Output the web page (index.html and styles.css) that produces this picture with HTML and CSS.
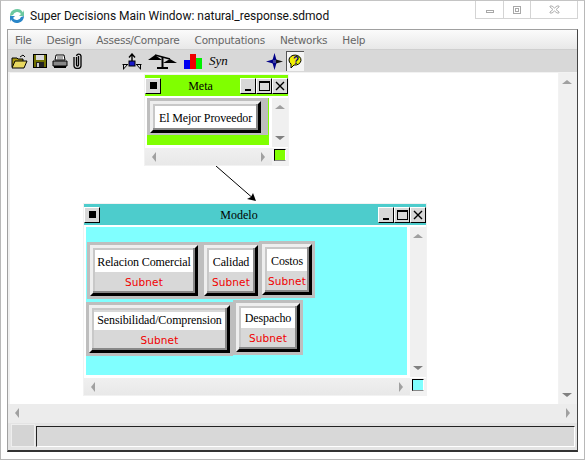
FILE: index.html
```html
<!DOCTYPE html>
<html lang="en">
<head>
  <meta charset="UTF-8">
  <title>Super Decisions Main Window</title>
  <link rel="stylesheet" href="styles.css">
</head>
<body>
<div class="frame">
  <div class="titlebar">
    <svg class="app-icon" width="16" height="16" viewBox="0 0 16 16">
      <path d="M1 8a7 7 0 0 1 13-3.500L15 2v6h-5l2-2a4.500 4.500 0 0 0-8 1z" fill="#6cc8a0"/>
      <path d="M15 8a7 7 0 0 1-13 3.500L1 14V8h5l-2 2a4.500 4.500 0 0 0 8-1z" fill="#2a86c8"/>
    </svg>
    <span class="title-text">Super Decisions Main Window: natural_response.sdmod</span>
    <div class="winbtns">
      <div class="winbtn wb-min"><svg width="8" height="3"><rect x="0.500" y="0.500" width="7" height="2" fill="none" stroke="#a8a8a8"/></svg></div>
      <div class="winbtn wb-max"><svg width="8" height="8"><rect x="0.500" y="0.500" width="7" height="7" fill="none" stroke="#a8a8a8"/><rect x="2.500" y="2.500" width="3" height="3" fill="none" stroke="#a8a8a8"/></svg></div>
      <div class="winbtn wb-close"><svg width="11" height="9"><path d="M1 1h2l2.500 2 2.500-2h2v1l-3 2.500 3 2.500v1H8L5.500 6 3 8H1V7l3-2.500L1 2z" fill="none" stroke="#b0b0b0"/></svg></div>
    </div>
  </div>

  <div class="client">
    <div class="menubar">
      <span>File</span><span>Design</span><span>Assess/Compare</span><span>Computations</span><span>Networks</span><span>Help</span>
    </div>

    <div class="toolbar">
      <svg class="t-open" width="17" height="15" viewBox="0 0 17 15">
        <path d="M1 13V4h5l1 1h5v2" fill="#a89810" stroke="#000"/>
        <path d="M1 14l3-7h12l-3 7z" fill="#e8d860" stroke="#000"/>
        <path d="M9 3l3-2 2 2" fill="none" stroke="#000"/>
      </svg>
      <svg class="t-save" width="14" height="14" viewBox="0 0 14 14">
        <rect x="0.500" y="0.500" width="13" height="13" fill="#707000" stroke="#000"/>
        <rect x="3" y="1" width="8" height="5" fill="#d8d8d8"/>
        <rect x="3" y="8" width="8" height="5" fill="#222"/>
        <rect x="4" y="9" width="2" height="4" fill="#ccc"/>
      </svg>
      <svg class="t-print" width="16" height="14" viewBox="0 0 16 14">
        <path d="M4 1h8l1 5H3z" fill="#fff" stroke="#000"/>
        <path d="M1 7h14v5H1z" fill="#888" stroke="#000"/>
        <path d="M2 13h12" stroke="#000" stroke-width="2"/>
        <path d="M5 3h6M5 5h6" stroke="#555"/>
      </svg>
      <svg class="t-clip" width="9" height="16" viewBox="0 0 9 16">
        <path d="M3.500 4v8a1 1 0 0 0 2 0V3M1 4v8.500a3.500 3 0 0 0 7 0V3a2.300 2.300 0 0 0-4.500 0" fill="none" stroke="#000" stroke-width="1.300"/>
      </svg>
      <svg class="t-net" width="20" height="17" viewBox="0 0 20 17">
        <rect x="7" y="8" width="6" height="5" fill="#1818c8" stroke="#000"/>
        <path d="M10 8V2M7 4.500L10 1l3 3.500" fill="none" stroke="#000" stroke-width="1.400"/>
        <path d="M6 11l-4.500 5M0.500 11.500h5M1.500 11.500v5" fill="none" stroke="#000"/>
        <path d="M14 11l4.500 5M19.500 11.500h-5M18.500 11.500v5" fill="none" stroke="#000"/>
      </svg>
      <svg class="t-scale" width="29" height="16" viewBox="0 0 29 16">
        <path d="M0 7l7-5 7 5z" fill="#000"/>
        <path d="M7 2l15 4" stroke="#000" stroke-width="1.500"/>
        <path d="M15 10l7-4 7 4z" fill="#000"/>
        <path d="M14.500 4v10M9 15h11" stroke="#000" stroke-width="2"/>
      </svg>
      <svg class="t-bars" width="18" height="16" viewBox="0 0 18 16">
        <rect x="0" y="7" width="6" height="9" fill="#0000f0"/>
        <rect x="6" y="1" width="6" height="15" fill="#f00000"/>
        <rect x="12" y="5" width="6" height="11" fill="#00f000"/>
      </svg>
      <span class="t-syn">Syn</span>
      <svg class="t-cross" width="17" height="17" viewBox="0 0 17 17">
        <path d="M0 8.500L7 6.500v4z" fill="#000088"/>
        <path d="M17 8.500L10 6.500v4z" fill="#111"/>
        <path d="M8.500 0L6.500 7h4z" fill="#000088"/>
        <path d="M8.500 17L6.500 10h4z" fill="#000088"/>
        <rect x="7" y="7" width="3" height="3" fill="#4040a0"/>
      </svg>
      <div class="t-help">
        <svg width="15" height="15" viewBox="0 0 15 15">
          <path d="M1 6a6 5 0 1 1 5 5l-3 3v-4a5 5 0 0 1-2-4z" fill="#f0f000" stroke="#000"/>
          <text x="5" y="10" class="help-mark">?</text>
        </svg>
      </div>
    </div>

    <div class="workarea">
      <div class="canvas">
        <svg class="arrow" width="50" height="40" viewBox="0 0 50 40">
          <path d="M5 3L44 37" stroke="#000"/>
          <path d="M45 38l-9-2 4-2 2-4z" fill="#000"/>
        </svg>

        <div class="subwin sw-meta">
          <div class="sw-title">
            <div class="mbtn"><i class="ic-sys"></i></div>
            <span class="sw-name">Meta</span>
            <div class="mbtn"><i class="ic-min"></i></div>
            <div class="mbtn"><i class="ic-max"></i></div>
            <div class="mbtn"><svg width="10" height="10"><path d="M1 1l8 8M9 1l-8 8" stroke="#000" stroke-width="1.400"/></svg></div>
          </div>
          <div class="sw-body">
            <div class="sw-canvas">
              <div class="node n-meta"><div class="face"><div class="name">El Mejor Proveedor</div></div></div>
            </div>
            <div class="vscroll"><b class="up"></b><b class="down"></b></div>
          </div>
          <div class="sw-foot">
            <div class="hscroll"><b class="left"></b><b class="right"></b></div>
            <div class="swatch"></div>
          </div>
        </div>

        <div class="subwin sw-model">
          <div class="sw-title">
            <div class="mbtn"><i class="ic-sys"></i></div>
            <span class="sw-name">Modelo</span>
            <div class="mbtn"><i class="ic-min"></i></div>
            <div class="mbtn"><i class="ic-max"></i></div>
            <div class="mbtn"><svg width="10" height="10"><path d="M1 1l8 8M9 1l-8 8" stroke="#000" stroke-width="1.400"/></svg></div>
          </div>
          <div class="sw-body">
            <div class="sw-canvas">
              <div class="node n-rel"><div class="face"><div class="name">Relacion Comercial</div><div class="sub">Subnet</div></div></div>
              <div class="node n-cal"><div class="face"><div class="name">Calidad</div><div class="sub">Subnet</div></div></div>
              <div class="node n-cos"><div class="face"><div class="name">Costos</div><div class="sub">Subnet</div></div></div>
              <div class="node n-sen"><div class="face"><div class="name">Sensibilidad/Comprension</div><div class="sub">Subnet</div></div></div>
              <div class="node n-des"><div class="face"><div class="name">Despacho</div><div class="sub">Subnet</div></div></div>
            </div>
            <div class="vscroll"><b class="up"></b><b class="down"></b></div>
          </div>
          <div class="sw-foot">
            <div class="hscroll"><b class="left"></b><b class="right"></b></div>
            <div class="swatch"></div>
          </div>
        </div>
      </div>
      <div class="vscroll main-v"><b class="up"></b><b class="down"></b></div>
    </div>

    <div class="hscroll main-h"><b class="left"></b><b class="right"></b></div>

    <div class="statusbar">
      <div class="status-cell"></div>
      <div class="status-field"></div>
    </div>
  </div>
</div>
</body>
</html>
```
FILE: styles.css
```css
* {
  box-sizing: border-box;
}
html, body {
  margin: 0;
  height: 460px;
  overflow: hidden;
}
body {
  background: #fff;
  font-family: "Liberation Serif", serif;
}
.frame {
  height: 460px;
  border: 1px solid #b8b8b8;
  border-top: 1px solid #c4c4c4;
  padding: 0 6px 7px 7px;
  display: flex;
  flex-direction: column;
}

/* title bar */
.titlebar {
  height: 28px;
  margin-left: -6px;
  display: flex;
  align-items: flex-start;
  flex: none;
}
.app-icon {
  margin: 7px 5px 0 7px;
  flex: none;
}
.title-text {
  font-family: Roboto, sans-serif;
  font-size: 12px;
  line-height: 16px;
  margin-top: 7px;
  color: #111;
}
.winbtns {
  margin-left: auto;
  display: flex;
  height: 18px;
  border: 1px solid #d4d4d4;
  border-top: 0;
}
.winbtn {
  height: 17px;
  display: flex;
  align-items: center;
  justify-content: center;
  border-left: 1px solid #d4d4d4;
}
.winbtn:first-child {
  border-left: 0;
}
.wb-min { width: 27px; padding-top: 3px; }
.wb-max { width: 27px; }
.wb-close { width: 47px; }

/* main client area */
.client {
  flex: 1;
  display: flex;
  flex-direction: column;
  border: 1px solid #a0a0a0;
  border-right: 1px solid #444;
  border-bottom: 2px solid #333;
  min-height: 0;
  margin-left: -1px;
}
.menubar {
  height: 20px;
  flex: none;
  display: flex;
  align-items: center;
  padding-left: 7px;
  gap: 15px;
  background: linear-gradient(#fbfbfb, #e8e8e8);
  border-bottom: 1px solid #cfcfcf;
  font-family: "DejaVu Sans", sans-serif;
  font-size: 10.500px;
  letter-spacing: -0.250px;
  color: #666;
}
.toolbar {
  height: 22px;
  flex: none;
  background: #d8d8d8;
  display: flex;
  align-items: center;
  padding-left: 3px;
}
.t-save { margin-left: 5px; }
.t-print { margin-left: 5px; }
.t-clip { margin-left: 5px; }
.t-net { margin-left: 40px; }
.t-scale { margin-left: 6px; }
.t-bars { margin-left: 7px; }
.t-syn {
  margin-left: 7px;
  width: 22px;
  font-family: "Liberation Serif", serif;
  font-style: italic;
  font-size: 13px;
  color: #000;
}
.t-cross { margin-left: 35px; }
.t-help {
  margin-left: 3px;
  width: 18px;
  height: 20px;
  background: #f4f4f4;
  border-left: 1px solid #555;
  border-top: 1px solid #555;
  display: flex;
  align-items: center;
  justify-content: center;
}
.help-mark {
  font-family: "Liberation Sans", sans-serif;
  font-size: 10px;
  font-weight: bold;
  fill: #000080;
}
.workarea {
  flex: 1;
  display: flex;
  background: #f2f2f2;
  min-height: 0;
  padding-left: 2px;
  padding-top: 1px;
}
.canvas {
  flex: 1;
  background: #fff;
  position: relative;
}
.arrow {
  position: absolute;
  left: 201px;
  top: 90px;
}

/* scrollbars */
.vscroll {
  flex: none;
  width: 16px;
  background: #f0f0f0;
  position: relative;
}
.main-v {
  width: 18px;
  margin-left: 1px;
}
.hscroll {
  flex: none;
  height: 17px;
  background: linear-gradient(#f0f0f0, #e8e8e8);
  position: relative;
}
.main-h {
  height: 19px;
  background: #ececec;
}
.up, .down, .left, .right {
  position: absolute;
  width: 0;
  height: 0;
  border-style: solid;
  border-color: transparent;
}
.up {
  top: 7px;
  left: 3px;
  border-width: 0 5px 4px;
  border-bottom-color: #a0a0a0;
}
.down {
  bottom: 7px;
  left: 3px;
  border-width: 4px 5px 0;
  border-top-color: #808080;
}
.left {
  left: 7px;
  top: 4px;
  border-width: 5px 4px 5px 0;
  border-right-color: #a0a0a0;
}
.right {
  right: 7px;
  top: 4px;
  border-width: 5px 0 5px 4px;
  border-left-color: #a0a0a0;
}

/* status bar */
.statusbar {
  height: 27px;
  flex: none;
  background: #e4e4e4;
  display: flex;
  padding: 1px 2px 3px 3px;
  gap: 1px;
}
.status-cell {
  width: 24px;
  background: #d4d4d4;
  border: 1px solid #eee;
}
.status-field {
  flex: 1;
  margin-top: 2px;
  background: #d8d8d8;
  border-top: 1px solid #222;
  border-left: 1px solid #222;
  border-right: 1px solid #fff;
  border-bottom: 1px solid #fff;
}

/* sub windows, placed freely on the canvas */
.subwin {
  position: absolute;
  background: #f2f2f2;
  padding: 1px;
  display: flex;
  flex-direction: column;
}
.sw-meta {
  left: 134px;
  top: 1px;
  width: 145px;
  height: 92px;
  --tint: #80ff00;
  --bar: #80ff00;
}
.sw-model {
  left: 73px;
  top: 130px;
  width: 344px;
  height: 193px;
  --tint: #80ffff;
  --bar: #4dcccc;
}
.sw-title {
  height: 21px;
  flex: none;
  background: var(--bar);
  display: flex;
  align-items: center;
}
.sw-name {
  flex: 1;
  text-align: center;
  font-size: 12px;
  padding-top: 2px;
  color: #000;
}
.mbtn {
  width: 16px;
  height: 16px;
  background: #d8d8d8;
  border-top: 1px solid #fff;
  border-left: 1px solid #fff;
  border-right: 1px solid #000;
  border-bottom: 1px solid #000;
  display: flex;
  align-items: center;
  justify-content: center;
  position: relative;
}
.ic-sys {
  width: 7px;
  height: 7px;
  background: #000;
}
.ic-min {
  width: 6px;
  height: 2px;
  background: #000;
  margin-top: 8px;
}
.ic-max {
  width: 11px;
  height: 10px;
  border: 1px solid #000;
  border-top-width: 2px;
}
.sw-body {
  flex: 1;
  display: flex;
  min-height: 0;
  padding-top: 2px;
  background: #fff;
}
.sw-canvas {
  flex: 1;
  margin-left: 2px;
  margin-right: 3px;
  background: var(--tint);
  position: relative;
  margin-bottom: 2px;
}
.sw-foot {
  flex: none;
  display: flex;
  border-top: 1px solid #fff;
}
.hscroll:not(.main-h) {
  flex: 1;
}
.swatch {
  flex: none;
  width: 12px;
  height: 12px;
  margin: 1px 2px 4px;
  background: var(--tint);
  border-top: 1px solid #000;
  border-left: 1px solid #000;
  border-right: 1px solid #fff;
  border-bottom: 1px solid #888;
}

/* nodes */
.node {
  position: absolute;
  background: #bebebe;
  padding: 3px;
}
.face {
  height: 100%;
  background: #d8d8d8;
  border-style: solid;
  border-width: 3px;
  border-color: #eee #000 #000 #eee;
  position: relative;
  padding: 2px 2px 0;
  box-shadow: inset -2px -2px 0 #888, inset 2px 2px 0 #c8c8c8;
}
.name {
  background: #fff;
  height: 22px;
  line-height: 24px;
  text-align: center;
  font-size: 12px;
  letter-spacing: -0.120px;
  color: #000;
  white-space: nowrap;
}
.sub {
  text-align: center;
  font-family: "DejaVu Sans", sans-serif;
  font-size: 10.500px;
  letter-spacing: 0.100px;
  line-height: 20px;
  color: #f00000;
}
.n-meta { left: 0; top: 0; width: 121px; height: 37px; padding: 3px 7px 2px 3px; }
.n-rel { left: 1px; top: 15px; width: 114px; height: 57px; }
.n-cal { left: 115px; top: 15px; width: 60px; height: 57px; }
.n-cos { left: 173px; top: 14px; width: 56px; height: 57px; }
.n-sen { left: 0; top: 75px; width: 147px; height: 54px; }
.n-sen .face { padding-top: 4px; }
.n-sen .name { height: 18px; line-height: 16px; }
.n-des { left: 147px; top: 73px; width: 70px; height: 55px; }
.n-des .name { height: 20px; line-height: 20px; }
```
